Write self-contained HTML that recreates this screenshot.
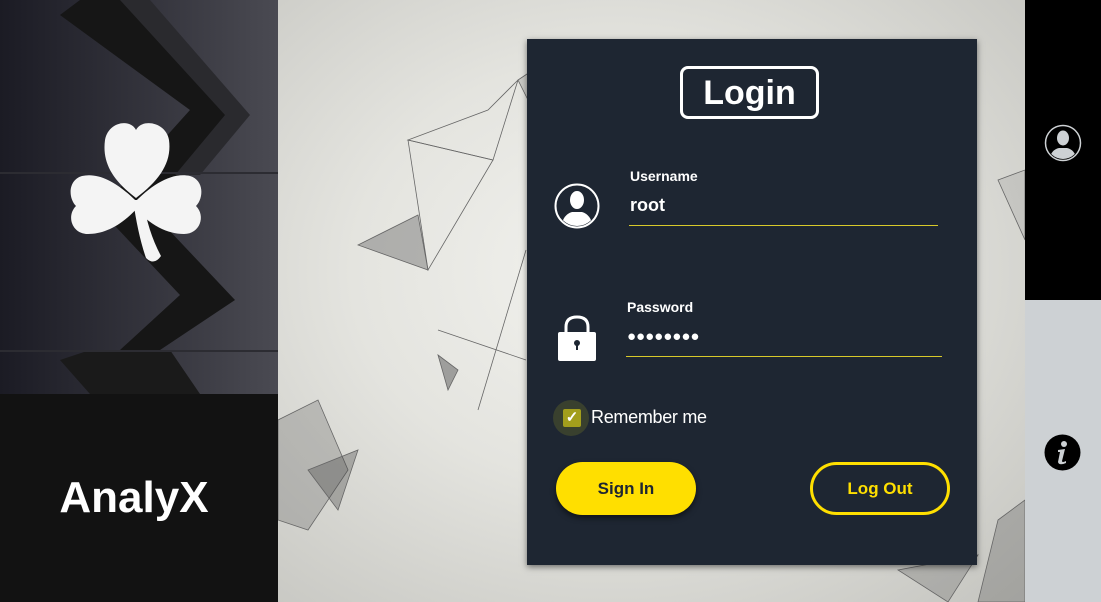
<!DOCTYPE html>
<html><head><style>
*{margin:0;padding:0;box-sizing:border-box}
body{width:1101px;height:602px;overflow:hidden;position:relative;font-family:"Liberation Sans",sans-serif;background:#ddddd8}
.left{position:absolute;left:0;top:0;width:278px;height:602px;background:#111}
.bg{position:absolute;left:278px;top:0;width:747px;height:602px;background:radial-gradient(ellipse at 45% 45%,#f2f2ee 0%,#e4e4df 45%,#c4c4bf 100%)}
.card{position:absolute;left:527px;top:39px;width:450px;height:526px;background:#1e2632;box-shadow:0 2px 6px rgba(0,0,0,.5);color:#fff}
.title{position:absolute;left:153px;top:27px;width:139px;height:53px;border:3px solid #fff;border-radius:8px;font-size:34px;font-weight:bold;text-align:center;line-height:48px}
.lbl{position:absolute;font-size:14px;font-weight:bold}
.val{position:absolute;font-size:18px;font-weight:bold}
.line{position:absolute;height:1px;background:#d8c92a}
.btn{position:absolute;top:423px;width:140px;height:53px;border-radius:27px;font-size:17px;font-weight:bold;text-align:center;line-height:53px}
</style></head><body>
<div class="left">
<svg width="278" height="394" viewBox="0 0 278 394" style="position:absolute;left:0;top:0">
<defs><linearGradient id="g" x1="0" x2="1"><stop offset="0" stop-color="#1b1b24"/><stop offset="1" stop-color="#4a4a52"/></linearGradient></defs>
<rect width="278" height="394" fill="url(#g)"/>
<polygon points="60,15 80,0 130,0 235,110 150,210 235,300 160,350 120,350 180,295 100,210 190,110" fill="#161616"/>
<polygon points="120,0 150,0 250,115 200,175 175,175 225,115" fill="#2a2a2e"/>
<polygon points="60,360 90,350 170,350 200,394 90,394" fill="#1a1a1a"/>
<rect y="172" width="278" height="2" fill="#2c2c32"/>
<rect y="350" width="278" height="2" fill="#2c2c32"/>
<g fill="#f4f4f4">
<path d="M136 198 C112 180 102 162 105 140 C108 122 130 118 136 130 C142 118 166 122 169 140 C172 162 160 180 136 198Z"/>
<path d="M140 205 C120 184 100 172 82 176 C68 180 68 198 76 206 C66 216 72 234 88 234 C104 234 122 226 140 205Z"/>
<path d="M132 205 C152 184 172 172 190 176 C204 180 204 198 196 206 C206 216 200 234 184 234 C168 234 150 226 132 205Z"/>
<path d="M133 200 Q138 235 146 258 Q154 266 161 256 Q148 232 143 200Z"/>
</g>
</svg>
<div style="position:absolute;left:0;top:394px;width:278px;height:208px;background:#121212;color:#fff;font-size:44px;font-weight:bold;text-align:center;line-height:208px;padding-right:10px">AnalyX</div>
</div>
<div class="bg">
<svg width="747" height="602" style="position:absolute;left:0;top:0" stroke="#666" stroke-width=".8" fill="none">
<polygon points="130,140 210,110 240,80 215,160" />
<polygon points="80,245 140,215 150,270" fill="#777" fill-opacity=".5"/>
<polygon points="130,140 150,270 215,160" />
<polygon points="240,80 300,40 260,120" fill="#888" fill-opacity=".3"/>
<polygon points="0,420 40,400 70,470 30,530 0,520" fill="#666" fill-opacity=".3"/>
<polygon points="30,470 80,450 60,510" fill="#444" fill-opacity=".35"/>
<line x1="200" y1="410" x2="248" y2="250"/>
<line x1="160" y1="330" x2="248" y2="360"/>
<polygon points="160,355 180,370 170,390" fill="#555" fill-opacity=".5"/>
<polygon points="720,520 747,500 747,602 700,602" fill="#555" fill-opacity=".3"/>
<polygon points="620,570 700,555 670,602" fill="#666" fill-opacity=".3"/>
<polygon points="720,180 747,170 747,240" fill="#888" fill-opacity=".2"/>
</svg>
</div>
<div class="card">
<div class="title">Login</div>
<svg style="position:absolute;left:27px;top:144px" width="46" height="46" viewBox="0 0 46 46"><circle cx="23" cy="23" r="21.5" fill="none" stroke="#fff" stroke-width="2"/><clipPath id="c"><circle cx="23" cy="23" r="20"/></clipPath><g clip-path="url(#c)" fill="#fff"><ellipse cx="23" cy="17" rx="7" ry="9"/><path d="M7 46 Q8 32 18 29 L28 29 Q38 32 39 46Z"/></g></svg>
<div class="lbl" style="left:103px;top:129px">Username</div>
<div class="val" style="left:103px;top:156px">root</div>
<div class="line" style="left:102px;top:186px;width:309px"></div>
<svg style="position:absolute;left:30px;top:275px" width="40" height="48" viewBox="0 0 40 48"><path d="M9 20 V13 Q9 3 20 3 Q31 3 31 13 V20" fill="none" stroke="#fff" stroke-width="3"/><rect x="1" y="18" width="38" height="29" rx="2" fill="#fff"/><circle cx="20" cy="29" r="3" fill="#1e2632"/><rect x="19" y="29" width="2" height="7" fill="#1e2632"/></svg>
<div class="lbl" style="left:100px;top:260px">Password</div>
<div class="val" style="left:100px;top:289px;font-size:15px;letter-spacing:0">●●●●●●●●</div>
<div class="line" style="left:99px;top:317px;width:316px"></div>
<div style="position:absolute;left:26px;top:361px;width:36px;height:36px;border-radius:50%;background:#39402e"></div>
<div style="position:absolute;left:36px;top:370px;width:18px;height:18px;border-radius:2px;background:#a39e1c;color:#fff;font-size:15px;line-height:18px;text-align:center;font-weight:bold">✓</div>
<div style="position:absolute;left:64px;top:368px;font-size:18px;letter-spacing:-.3px">Remember me</div>
<div class="btn" style="left:29px;background:#ffdf00;color:#1e2632;box-shadow:0 3px 6px rgba(0,0,0,.5)">Sign In</div>
<div class="btn" style="left:283px;border:3px solid #ffdf00;color:#ffdf00;line-height:47px">Log Out</div>
</div>
<div style="position:absolute;left:1025px;top:0;width:76px;height:300px;background:#000"></div>
<div style="position:absolute;left:1025px;top:300px;width:76px;height:302px;background:#cdd1d4"></div>
<svg style="position:absolute;left:1044px;top:124px" width="38" height="38" viewBox="0 0 38 38"><circle cx="19" cy="19" r="17.5" fill="none" stroke="#cdd1d4" stroke-width="1.5"/><clipPath id="c2"><circle cx="19" cy="19" r="16"/></clipPath><g clip-path="url(#c2)" fill="#cdd1d4"><ellipse cx="19" cy="14" rx="6" ry="7.5"/><path d="M5 38 Q6 26 15 24 L23 24 Q32 26 33 38Z"/></g></svg>
<svg style="position:absolute;left:1044px;top:434px" width="37" height="37" viewBox="0 0 37 37"><circle cx="18.5" cy="18.5" r="18" fill="#000"/><circle cx="20" cy="10" r="3" fill="#cdd1d4"/><path d="M14 16 L21 15 L18 27 Q18 29 22 27 L22 29 Q15 32 14 28 L16 18 L14 18Z" fill="#cdd1d4"/></svg>
</body></html>
